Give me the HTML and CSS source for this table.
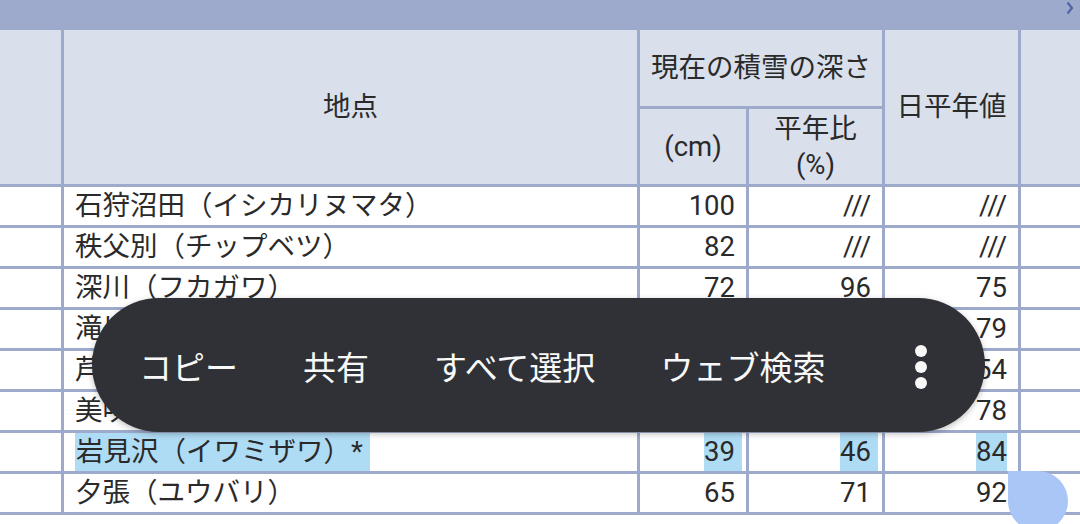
FILE: index.html
```html
<!DOCTYPE html>
<html lang="ja">
<head>
<meta charset="utf-8">
<title>積雪の深さ</title>
<link rel="stylesheet" href="styles.css">
</head>
<body>
<div class="topbar">
  <svg class="scroll-arrow" width="8" height="14" viewBox="0 0 8 14"><path d="M1.5 1.5 L6 7 L1.5 12.5" fill="none" stroke="#4f63a6" stroke-width="2.2"/></svg>
</div>
<div class="table-wrap">
  <div class="grid">
    <div class="h rs2"></div>
    <div class="h rs2">地点</div>
    <div class="h cs2">現在の積雪の深さ</div>
    <div class="h rs2">日平年値</div>
    <div class="h rs2"></div>
    <div class="h">(cm)</div>
    <div class="h">平年比<br>(%)</div>

    <div class="d"></div><div class="d name">石狩沼田（イシカリヌマタ）</div><div class="d num">100</div><div class="d num">///</div><div class="d num">///</div><div class="d"></div>
    <div class="d"></div><div class="d name">秩父別（チップベツ）</div><div class="d num">82</div><div class="d num">///</div><div class="d num">///</div><div class="d"></div>
    <div class="d"></div><div class="d name">深川（フカガワ）</div><div class="d num">72</div><div class="d num">96</div><div class="d num">75</div><div class="d"></div>
    <div class="d"></div><div class="d name">滝川（タキカワ）</div><div class="d num">60</div><div class="d num">76</div><div class="d num">79</div><div class="d"></div>
    <div class="d"></div><div class="d name">芦別（アシベツ）</div><div class="d num">48</div><div class="d num">89</div><div class="d num">54</div><div class="d"></div>
    <div class="d"></div><div class="d name">美唄（ビバイ）</div><div class="d num">55</div><div class="d num">71</div><div class="d num">78</div><div class="d"></div>
    <div class="d"></div><div class="d name"><span class="sel sel-tail">岩見沢（イワミザワ）*</span></div><div class="d num"><span class="sel sel-tail">39</span></div><div class="d num"><span class="sel sel-tail">46</span></div><div class="d num"><span class="sel">84</span></div><div class="d"></div>
    <div class="d"></div><div class="d name">夕張（ユウバリ）</div><div class="d num">65</div><div class="d num">71</div><div class="d num">92</div><div class="d"></div>
  </div>
</div>

<div class="toolbar">
  <span class="action">コピー</span>
  <span class="action">共有</span>
  <span class="action">すべて選択</span>
  <span class="action">ウェブ検索</span>
  <span class="more"><i></i><i></i><i></i></span>
</div>
<div class="handle"></div>
</body>
</html>
```

FILE: styles.css
```css
html, body {
  margin: 0;
  padding: 0;
  overflow: hidden;
  background: #ffffff;
}
body {
  width: 1080px;
  height: 524px;
  position: relative;
  font-family: Roboto, "Noto Sans CJK JP", sans-serif;
  font-size: 27.5px;
  color: #2a2a2a;
}
.topbar {
  height: 30px;
  background: #9eaacb;
  display: flex;
  justify-content: flex-end;
  align-items: flex-start;
}
.scroll-arrow {
  margin: 1px 6px 0 0;
}
.table-wrap {
  width: 1080px;
  overflow: hidden;
}
.grid {
  display: grid;
  width: max-content;
  grid-template-columns: 61px 573px 106px 133px 133px 80px;
  grid-template-rows: 76px 75px repeat(8, 38px);
  gap: 3px;
  padding-bottom: 3px;
  background: #9eaacb;
}
.h {
  background: #d9dfeb;
  display: flex;
  align-items: center;
  justify-content: center;
  text-align: center;
  line-height: 1.28;
}
.rs2 { grid-row: span 2; }
.cs2 { grid-column: span 2; }
.d {
  background: #ffffff;
  line-height: 38px;
  white-space: nowrap;
}
.name {
  padding-left: 11px;
}
.num {
  text-align: right;
  padding-right: 11px;
}
.sel {
  display: inline-block;
  background: #aedcf4;
  line-height: 38px;
}
.sel-tail {
  padding-right: 7px;
  margin-right: -7px;
}
.name .sel {
  padding-left: 1px;
}
.toolbar {
  position: absolute;
  left: 92px;
  top: 298px;
  width: 893px;
  height: 134px;
  border-radius: 67px;
  background: #303136;
  box-shadow: 0 2px 6px rgba(0, 0, 0, 0.25);
  display: flex;
  align-items: center;
  gap: 65px;
  padding-left: 47px;
  box-sizing: border-box;
  font-family: "Noto Sans CJK JP", sans-serif;
  font-size: 33px;
  font-weight: 400;
  color: #f8f8f8;
}
.action {
  white-space: nowrap;
  line-height: 40px;
  padding-top: 2px;
}
.more {
  margin-left: auto;
  margin-right: 58px;
  display: flex;
  flex-direction: column;
  gap: 4px;
  padding-top: 4px;
}
.more i {
  display: block;
  width: 12px;
  height: 12px;
  border-radius: 50%;
  background: #f8f8f8;
}
.handle {
  position: absolute;
  left: 1008px;
  top: 471px;
  width: 60px;
  height: 60px;
  background: #a9c6f6;
  border-radius: 0 30px 30px 30px;
}
```
